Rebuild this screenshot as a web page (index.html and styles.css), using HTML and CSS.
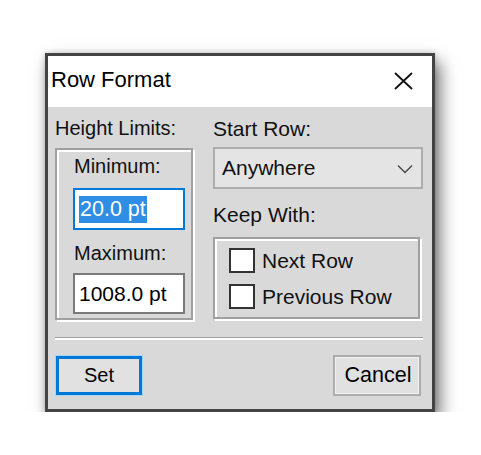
FILE: index.html
```html
<!DOCTYPE html>
<html>
<head>
<meta charset="utf-8">
<title>Row Format</title>
<link rel="stylesheet" href="styles.css">
</head>
<body>
<div class="window">
  <div class="titlebar">
    <span class="title">Row Format</span>
    <svg class="close" width="22" height="18" viewBox="0 0 22 18"><path d="M2 1 L19 17 M19 1 L2 17" stroke="#111" stroke-width="1.8" fill="none"/></svg>
  </div>
  <div class="content">
    <div class="columns">
      <div class="col-left">
        <div class="label narrow">Height Limits:</div>
        <div class="group limits">
          <div class="label narrow">Minimum:</div>
          <div class="input focused"><span class="sel">20.0 pt</span></div>
          <div class="label narrow max-label">Maximum:</div>
          <div class="input plain">1008.0 pt</div>
        </div>
      </div>
      <div class="col-right">
        <div class="label">Start Row:</div>
        <div class="select">
          <span>Anywhere</span>
          <svg class="chev" width="16" height="10" viewBox="0 0 16 10"><path d="M1 1.5 L8 8.5 L15 1.5" stroke="#444" stroke-width="1.3" fill="none"/></svg>
        </div>
        <div class="label keep-label">Keep With:</div>
        <div class="group keep">
          <div class="check"><span class="box"></span><span>Next Row</span></div>
          <div class="check"><span class="box"></span><span>Previous Row</span></div>
        </div>
      </div>
    </div>
    <div class="sep"></div>
    <div class="buttons">
      <div class="btn default">Set</div>
      <div class="btn cancel">Cancel</div>
    </div>
  </div>
</div>
</body>
</html>
```

FILE: styles.css
```css
html, body {
  margin: 0;
  padding: 0;
  background: #fff;
}
body {
  padding: 53px 0 0 45px;
  font-family: "Liberation Sans", Arial, sans-serif;
  font-size: 21px;
  color: #111;
}
.window {
  width: 390px;
  box-sizing: border-box;
  border: 3px solid #444;
  background: #d9d9d9;
  box-shadow: 5px 9px 16px rgba(0,0,0,0.55), 0 0 6px rgba(0,0,0,0.18);
}
.titlebar {
  height: 51px;
  box-sizing: border-box;
  background: #fff;
  display: flex;
  align-items: center;
  justify-content: space-between;
  padding: 0 17px 4px 3px;
}
.title {
  font-size: 22px;
  line-height: 26px;
  color: #000;
}
.close {
  display: block;
  margin-top: 3px;
}
.content {
  padding: 10px 9px 13px 7px;
}
.columns {
  display: flex;
  gap: 18px;
}
.col-left {
  width: 140px;
}
.col-right {
  width: 210px;
}
.label {
  line-height: 23px;
  height: 23px;
  white-space: nowrap;
}
.narrow {
  font-size: 20px;
}
.group {
  box-sizing: border-box;
  border: 2px solid #a0a0a0;
  box-shadow: inset 2px 2px 0 #fff, 2px 2px 0 #fff;
}
.limits {
  width: 138px;
  height: 172px;
  margin-top: 8px;
  padding: 5px 0 0 17px;
}
.input {
  box-sizing: border-box;
  width: 112px;
  background: #fff;
  display: flex;
  align-items: center;
  padding-left: 4px;
  margin-left: -1px;
  white-space: nowrap;
  color: #000;
}
.focused {
  height: 42px;
  margin-top: 10px;
  border: 2px solid #0078d7;
}
.sel {
  display: inline-block;
  background: #2f8de4;
  color: #fff;
  height: 27px;
  line-height: 27px;
  padding: 0 1px 0 1px;
  font-size: 21.5px;
}
.max-label {
  margin-top: 12px;
}
.plain {
  height: 41px;
  margin-top: 8px;
  border: 2px solid #7a7a7a;
}
.select {
  box-sizing: border-box;
  margin-top: 7px;
  height: 42px;
  border: 2px solid #adadad;
  background: #e4e4e4;
  display: flex;
  align-items: center;
  justify-content: space-between;
  padding: 0 8px 0 7px;
}
.chev {
  display: block;
  margin-top: 2px;
}
.keep-label {
  margin-top: 14px;
}
.keep {
  width: 207px;
  height: 82px;
  margin-top: 11px;
  padding: 9px 0 0 14px;
  display: flex;
  flex-direction: column;
  gap: 11px;
}
.check {
  display: flex;
  align-items: center;
  gap: 7px;
  height: 25px;
  white-space: nowrap;
}
.box {
  box-sizing: border-box;
  width: 26px;
  height: 25px;
  border: 2px solid #333;
  background: #fff;
}
.sep {
  margin-top: 17px;
  border-top: 1px solid #a0a0a0;
  border-bottom: 2px solid #fff;
}
.buttons {
  margin-top: 15px;
  display: flex;
  justify-content: space-between;
  padding-right: 2px;
}
.btn {
  box-sizing: border-box;
  width: 88px;
  height: 41px;
  background: #e1e1e1;
  display: flex;
  align-items: center;
  justify-content: center;
  color: #000;
}
.default {
  font-size: 20px;
  border: 1px solid #a9d5f5;
  box-shadow: inset 0 0 0 3px #0078d7;
}
.cancel {
  font-size: 21.5px;
  border: 2px solid #adadad;
  box-shadow: inset 0 0 0 1px #f2f2f2;
  padding-left: 2px;
}
```
